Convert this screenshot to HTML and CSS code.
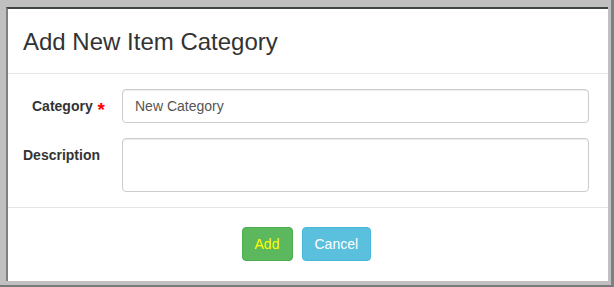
FILE: index.html
```html
<!DOCTYPE html>
<html lang="en">
<head>
  <meta charset="UTF-8">
  <title>Add New Item Category</title>
  <link rel="stylesheet" href="styles.css">
</head>
<body>
  <div class="frame">
    <div class="modal">
      <div class="modal-header">
        <h4 class="modal-title">Add New Item Category</h4>
      </div>
      <form class="modal-body">
        <div class="form-row">
          <label class="form-label required" for="category">Category <span class="star">*</span></label>
          <input id="category" class="form-control" type="text" value="New Category">
        </div>
        <div class="form-row top">
          <label class="form-label" for="description">Description</label>
          <textarea id="description" class="form-control area"></textarea>
        </div>
      </form>
      <div class="modal-footer">
        <button class="btn btn-add">Add</button>
        <button class="btn btn-cancel">Cancel</button>
      </div>
    </div>
  </div>
</body>
</html>
```

FILE: styles.css
```css
html, body { margin:0; padding:0; background:#c0c0c0; font-family:"Liberation Sans", Arial, sans-serif; color:#333; }
.frame { width:614px; height:287px; box-sizing:border-box; padding:7px 3px 4px 6px; border-right:3px solid #808080; border-bottom:2px solid #7a7a7a; }
.modal { height:100%; box-sizing:border-box; background:#fff; border-left:2px solid #7f7f7f; border-top:2px solid #3f4447; display:flex; flex-direction:column; }
.modal-header { padding:19px 15px 18px; border-bottom:1px solid #e5e5e5; }
.modal-title { margin:0; font-size:24px; font-weight:normal; line-height:27px; color:#333; }
.modal-body { padding:15px 19px 15px 15px; margin:0; display:flex; flex-direction:column; gap:15px; border-bottom:1px solid #e5e5e5; }
.form-row { display:grid; grid-template-columns:99px 1fr; align-items:center; }
.form-row.top { align-items:start; }
.form-label { font-size:14px; font-weight:bold; line-height:20px; padding-left:0; }
.form-label.required { padding-left:9px; }
.form-row.top .form-label { padding-top:7px; }
.star { display:inline-block; color:#f00; font-size:19px; line-height:14px; margin-left:1px; vertical-align:-5px; }
.form-control { height:34px; box-sizing:border-box; padding:6px 12px; border:1px solid #ccc; border-radius:4px; font-family:inherit; font-size:14px; color:#555; box-shadow:inset 0 1px 1px rgba(0,0,0,.075); outline:none; }
.form-control.area { height:54px; resize:none; }
.modal-footer { padding:19px 19px 20px 15px; display:flex; justify-content:center; gap:9px; }
.btn { height:34px; padding:6px 12px; border:1px solid transparent; border-radius:4px; font-family:inherit; font-size:14px; line-height:20px; }
.btn-add { width:51px; background:#5cb85c; border-color:#4cae4c; color:#ffff00; }
.btn-cancel { width:69px; background:#5bc0de; border-color:#46b8da; color:#fff; }
```
